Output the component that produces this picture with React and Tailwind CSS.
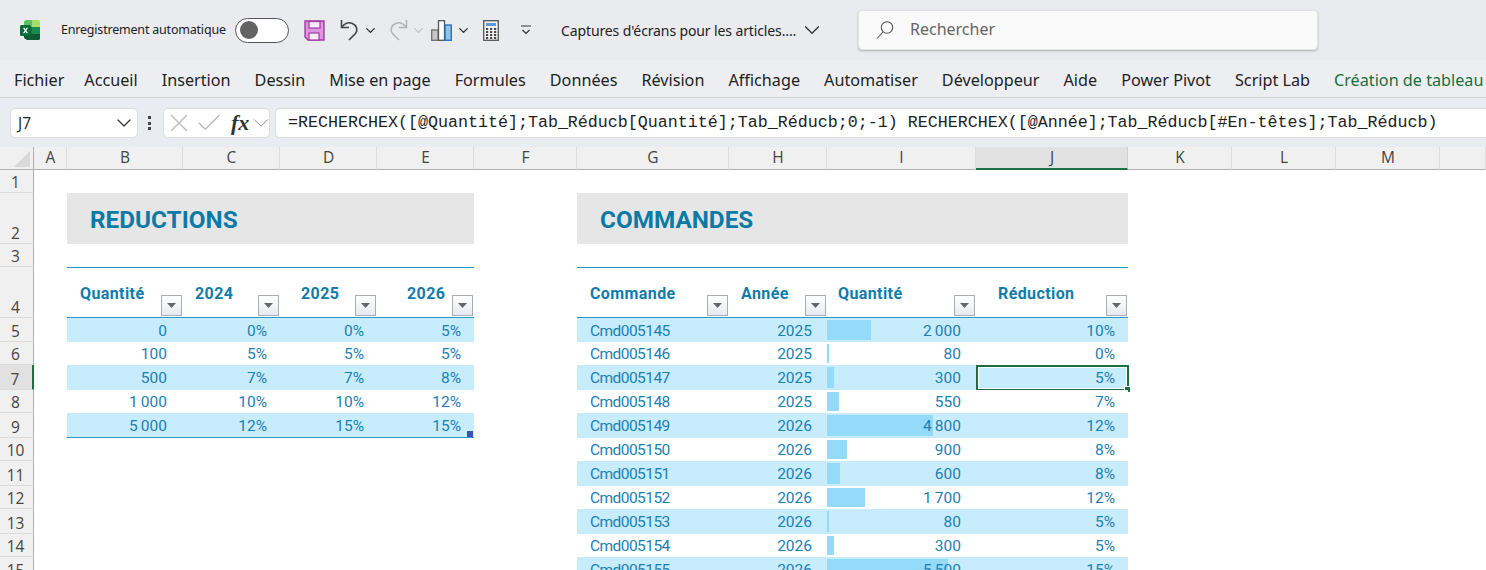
import { ChevronDown, X, Check } from "lucide-react";

const NS = "\u2009";
const menu = ["Accueil","Insertion","Dessin","Mise en page","Formules","Données","Révision","Affichage","Automatiser","Développeur","Aide","Power Pivot","Script Lab"];
const cols = ["A","B","C","D","E","F","G","H","I","J","K","L","M",""];
const rowNums = [1,2,3,4,5,6,7,8,9,10,11,12,13,14,15];
const reductions = [
  ["0","0%","0%","5%"],
  ["100","5%","5%","5%"],
  ["500","7%","7%","8%"],
  [`1${NS}000`,"10%","10%","12%"],
  [`5${NS}000`,"12%","15%","15%"],
];
const orders = [
  ["Cmd005145","2025",`2${NS}000`,"10%",44],
  ["Cmd005146","2025","80","0%",2],
  ["Cmd005147","2025","300","5%",7],
  ["Cmd005148","2025","550","7%",12],
  ["Cmd005149","2026",`4${NS}800`,"12%",106],
  ["Cmd005150","2026","900","8%",20],
  ["Cmd005151","2026","600","8%",13],
  ["Cmd005152","2026",`1${NS}700`,"12%",38],
  ["Cmd005153","2026","80","5%",2],
  ["Cmd005154","2026","300","5%",7],
  ["Cmd005155","2026",`5${NS}500`,"15%",121],
];

function ExcelLogo() {
  return (
    <svg width="20" height="21" viewBox="0 0 20 21">
      <path d="M4 1.5 6 0h8v7H4z" fill="#5cc25f" />
      <path d="M12 0h6.5a1.5 1.5 0 0 1 1.5 1.5V7h-8z" fill="#a3df6c" />
      <path d="M11 7h9v7h-9z" fill="#1b8a4e" />
      <path d="M4 7h8v7H4z" fill="#15703f" />
      <path d="M4 14h16v4.5a1.5 1.5 0 0 1-1.5 1.5H7l-3-2z" fill="#0e5a32" />
      <rect x="0" y="5" width="11" height="11" rx="1.5" fill="#0d6b3a" />
      <path d="M3 7.7h1.5l1 1.8 1-1.8H8l-1.7 2.8L8 13.3H6.5l-1-1.9-1 1.9H3l1.7-2.8z" fill="#fff" />
    </svg>
  );
}
function SaveIcon() {
  return (
    <svg width="21" height="21" viewBox="0 0 21 21">
      <path d="M1 1h19v19H4l-3-3z" fill="#dc96dc" stroke="#a33aa3" strokeWidth="1.4" />
      <rect x="5" y="1.5" width="11" height="6.5" fill="#f8ecf8" stroke="#a33aa3" strokeWidth="1.2" />
      <rect x="5" y="13" width="10" height="7" fill="#f8ecf8" stroke="#a33aa3" strokeWidth="1.2" />
    </svg>
  );
}
function UndoIcon({ color, flip }) {
  return (
    <svg width="20" height="22" viewBox="0 0 20 22" className={flip ? "-scale-x-100" : ""}>
      <path d="M1.5 1v7.5H9" fill="none" stroke={color} strokeWidth="1.6" />
      <path d="M2 8C5 4 9 3 12.5 4.5c4.5 2 5.5 6.5 3 10L9 21" fill="none" stroke={color} strokeWidth="1.6" />
    </svg>
  );
}
function ChartIcon() {
  return (
    <svg width="21" height="21" viewBox="0 0 21 21">
      <rect x="0.7" y="10" width="6.5" height="10.3" fill="#c8c8c8" stroke="#6f6f6f" strokeWidth="1.3" />
      <rect x="7.5" y="0.7" width="6" height="19.6" fill="#fff" stroke="#555" strokeWidth="1.3" />
      <rect x="14" y="5" width="6.3" height="15.3" fill="#8ec4ec" stroke="#1a6fc0" strokeWidth="1.3" />
    </svg>
  );
}
function CalcIcon() {
  return (
    <svg width="16" height="21" viewBox="0 0 16 21">
      <rect x="0.7" y="0.7" width="14.6" height="19.6" fill="#f2f2f2" stroke="#555" strokeWidth="1.3" />
      <rect x="3" y="3" width="10" height="3" fill="#5b9bd5" />
      {[8, 11, 14, 17].map((y) =>
        [3, 7, 11].map((x) => <rect key={`${x}-${y}`} x={x} y={y} width="2.2" height="2" fill="#444" />)
      )}
    </svg>
  );
}
function Customize() {
  return (
    <svg width="12" height="10" viewBox="0 0 12 10">
      <path d="M1 1h10" stroke="#333" strokeWidth="1" />
      <path d="M2.5 5 6 8.5 9.5 5" fill="none" stroke="#333" strokeWidth="1.2" />
    </svg>
  );
}
function SearchIcon() {
  return (
    <svg width="20" height="20" viewBox="0 0 20 20">
      <circle cx="12" cy="7.5" r="5.7" fill="none" stroke="#555" strokeWidth="1.1" />
      <path d="M8 12 2 18.5" stroke="#555" strokeWidth="1.1" />
    </svg>
  );
}
function FilterBtn() {
  return (
    <div className="w-[21px] h-[21px] shrink-0 border border-[#a9adb3] bg-gradient-to-b from-white to-[#e6e9ef] flex items-center justify-center">
      <svg width="9" height="5" viewBox="0 0 9 5"><path d="M0 0h9L4.5 5z" fill="#666" /></svg>
    </div>
  );
}
function TableHead({ label, pad = "pl-[13px]", cls = "" }) {
  return (
    <div className={`flex justify-between border-t border-b border-[#2597c9] pr-px pb-px ${pad} ${cls}`}>
      <span className="pt-[16px] text-[16px] leading-[20px] font-bold tracking-[0.4px] text-[#0f7cab] font-['Roboto',sans-serif]">{label}</span>
      <div className="self-end"><FilterBtn /></div>
    </div>
  );
}
function Cell({ i, children, right = true, pr = "pr-[13px]", cls = "", bottom = false }) {
  return (
    <div className={`relative flex items-center pt-[3px] min-w-0 whitespace-nowrap ${right ? "justify-end" : "justify-start"} ${pr} ${i % 2 === 0 ? "bg-[#c7ecfc]" : "bg-white"} ${bottom ? "border-b border-[#2597c9]" : ""} ${cls}`}>
      {children}
    </div>
  );
}

export default function App() {
  return (
    <div className="w-[1486px] h-[570px] overflow-hidden bg-white flex flex-col font-['Open_Sans',sans-serif]">
      {/* title bar */}
      <div className="h-[60px] shrink-0 bg-[#e9ebef] flex items-center">
        <div className="ml-[20px] w-[20px]"><ExcelLogo /></div>
        <span className="ml-[21px] w-[174px] text-[12.5px] tracking-[-0.2px] text-[#222] font-['Noto_Sans',sans-serif]">Enregistrement automatique</span>
        <div className="w-[54px] h-[25px] rounded-full border border-[#555] bg-white flex items-center pl-[4px]">
          <div className="w-[18px] h-[18px] rounded-full bg-[#636363]" />
        </div>
        <div className="ml-[15px]"><SaveIcon /></div>
        <div className="ml-[15px]"><UndoIcon color="#444" /></div>
        <ChevronDown size={15} strokeWidth={2.2} className="ml-[3px] text-[#333]" />
        <div className="ml-[10px]"><UndoIcon color="#b5b5b5" flip /></div>
        <ChevronDown size={15} strokeWidth={2.2} className="ml-[3px] text-[#c4c4c4]" />
        <div className="ml-[5px]"><ChartIcon /></div>
        <ChevronDown size={15} strokeWidth={2.2} className="ml-[4px] text-[#333]" />
        <div className="ml-[12px]"><CalcIcon /></div>
        <div className="ml-[21px]"><Customize /></div>
        <span className="ml-[29px] w-[238px] text-[14px] tracking-[-0.12px] text-[#222] font-['Noto_Sans',sans-serif] whitespace-nowrap">Captures d'écrans pour les articles....</span>
        <ChevronDown size={26} strokeWidth={1.1} className="text-[#333]" />
        <div className="ml-[33px] w-[460px] h-[40px] bg-[#fafafa] rounded-[4px] border border-[#e2e3e5] shadow-[0_1px_2px_rgba(0,0,0,0.25)] flex items-center pl-[16px]">
          <SearchIcon />
          <span className="ml-[15px] -mt-[2px] text-[16px] text-[#666] font-['Noto_Sans',sans-serif]">Rechercher</span>
        </div>
      </div>
      {/* menu */}
      <div className="h-[38px] shrink-0 bg-[#eceef2] flex items-start pl-[14px] gap-[24px] whitespace-nowrap border-b border-[#d3d3d3] font-['Noto_Sans',sans-serif] text-[16.2px] text-[#222] overflow-hidden">
        <span className="leading-[22px] mt-[9px] -mr-[4px]">Fichier</span>
        {menu.map((m) => <span key={m} className="leading-[22px] mt-[9px]">{m}</span>)}
        <span className="leading-[22px] mt-[9px] text-[#17703f]">Création de tableau</span>
      </div>
      {/* formula bar */}
      <div className="h-[49px] shrink-0 bg-[#e9ecf0] flex items-start pt-[10px] pl-[10px]">
        <div className="w-[128px] h-[30px] bg-white rounded-[5px] border border-[#dcdcdc] flex items-center justify-between pl-[7px] pr-px text-[15.5px] text-[#222]">
          <span className="pt-px">J7</span>
          <ChevronDown size={24} strokeWidth={1.3} className="text-[#333]" />
        </div>
        <div className="ml-[10px] mt-[8px] h-[14px] flex flex-col justify-between w-[4px]">
          <div className="w-[3px] h-[3px] bg-[#444]" /><div className="w-[3px] h-[3px] bg-[#444]" /><div className="w-[3px] h-[3px] bg-[#444]" />
        </div>
        <div className="ml-[11px] w-[107px] h-[30px] bg-white rounded-[5px] border border-[#dcdcdc] flex items-center">
          <X size={30} strokeWidth={1} className="text-[#b8b8b8] shrink-0" />
          <Check size={30} strokeWidth={1} className="text-[#b8b8b8] shrink-0" />
          <span className="ml-[7px] w-[20px] shrink-0 font-['Liberation_Serif',serif] italic font-bold text-[22px] leading-none text-[#333]">fx</span>
          <ChevronDown size={26} strokeWidth={0.9} className="-ml-[3px] text-[#888] shrink-0" />
        </div>
        <div className="ml-[5px] flex-1 h-[30px] pt-px bg-white rounded-l-[5px] border border-r-0 border-[#dcdcdc] flex items-center pl-[12px] font-['Liberation_Mono',monospace] text-[16.66px] text-[#222] whitespace-nowrap overflow-hidden">
          =RECHERCHEX([@Quantité];Tab_Réducb[Quantité];Tab_Réducb;0;-1) RECHERCHEX([@Année];Tab_Réducb[#En-têtes];Tab_Réducb)
        </div>
      </div>
      {/* sheet */}
      <div className="flex-1 grid grid-cols-[34px_33px_116px_97px_97px_97px_103px_152px_98px_149px_152px_104px_104px_104px_46px] grid-rows-[23px_23px_51px_23px_51px_24px_23px_25px_23px_25px_23px_25px_23px_25px_23px_24px] text-[15.5px] text-[#1a80b3] font-['Roboto',sans-serif] overflow-hidden">
        {/* column headers */}
        <div className="bg-[#f0f0f0] border-r border-b border-[#b0b0b0] flex items-end justify-end pr-[3px] pb-[2px]">
          <svg width="16" height="16" viewBox="0 0 16 16"><path d="M16 0v16H0z" fill="#d9d9d9" /></svg>
        </div>
        {cols.map((c) => (
          <div key={c} className={`flex items-center justify-center pl-px border-r text-[15.5px] font-['Open_Sans',sans-serif] text-[#444] ${c === "J" ? "bg-[#e1e1e1] border-[#cfcfcf] border-b-2 border-b-[#1e7145]" : "bg-[#f0f0f0] border-[#dcdcdc] border-b border-b-[#b0b0b0]"}`}>{c}</div>
        ))}
        {rowNums.map((n) => {
          const sel = n === 7;
          const head = (
            <div key={`h${n}`} className={`col-start-1 flex items-end justify-center pr-[2px] text-[15.5px] leading-[20px] border-b border-[#dadada] font-['Open_Sans',sans-serif] text-[#444] ${sel ? "bg-[#e1e1e1] border-r-2 border-r-[#1e7145]" : "bg-[#f0f0f0] border-r border-r-[#b0b0b0]"}`}>{n}</div>
          );
          const cells = [];
          if (n === 2) {
            cells.push(
              <div key="t1" className="col-start-3 col-span-4 bg-[#e6e6e7] flex items-center pl-[23px] pt-[3px] text-[24.3px] font-bold text-[#0b7ba6]">REDUCTIONS</div>,
              <div key="t2" className="col-start-8 col-span-4 bg-[#e6e6e7] flex items-center pl-[23px] pt-[3px] text-[24.3px] font-bold text-[#0b7ba6]">COMMANDES</div>
            );
          }
          if (n === 4) {
            cells.push(
              <TableHead key="a" label="Quantité" cls="col-start-3" />,
              <TableHead key="a2" label="2024" pad="pl-[12px]" />,
              <TableHead key="a3" label="2025" pad="pl-[21px]" />,
              <TableHead key="a4" label="2026" pad="pl-[30px]" />,
              <TableHead key="b" label="Commande" cls="col-start-8" />,
              <TableHead key="c" label="Année" pad="pl-[12px]" />,
              <TableHead key="d" label="Quantité" pad="pl-[11px]" />,
              <TableHead key="e" label="Réduction" pad="pl-[22px]" />
            );
          }
          if (n >= 5) {
            const i = n - 5;
            if (i < 5) {
              const r = reductions[i];
              const b = i === 4;
              cells.push(
                <Cell key="r0" i={i} pr="pr-[16px]" cls="col-start-3" bottom={b}>{r[0]}</Cell>,
                <Cell key="r1" i={i} bottom={b}>{r[1]}</Cell>,
                <Cell key="r2" i={i} bottom={b}>{r[2]}</Cell>,
                <Cell key="r3" i={i} bottom={b}>
                  {r[3]}
                  {b && <div className="absolute right-px bottom-0 w-[6px] h-[6px] bg-[#3f51b5]" />}
                </Cell>
              );
            }
            const o = orders[i];
            cells.push(
              <Cell key="o0" i={i} right={false} pr="pl-[13px]" cls="col-start-8 tracking-[-0.55px]">{o[0]}</Cell>,
              <Cell key="o1" i={i} pr="pr-[15px]">{o[1]}</Cell>,
              <Cell key="o2" i={i} pr="pr-[15px]">
                <div className="absolute left-0 top-[2px] bottom-[2px] bg-[#93dbf8]" style={{ width: o[4] }} />
                <span className="relative">{o[2]}</span>
              </Cell>,
              <Cell key="o3" i={i}>
                <span className="relative">{o[3]}</span>
                {sel && (
                  <div className="absolute top-0 -bottom-px left-0 -right-px border-2 border-[#1e6e42]">
                    <div className="absolute inset-0 border border-white" />
                    <div className="absolute -right-[3px] -bottom-[3px] w-[6px] h-[6px] bg-[#1e6e42] border-t border-l border-white" />
                  </div>
                )}
              </Cell>
            );
          }
          return [head, ...cells];
        })}
      </div>
    </div>
  );
}
